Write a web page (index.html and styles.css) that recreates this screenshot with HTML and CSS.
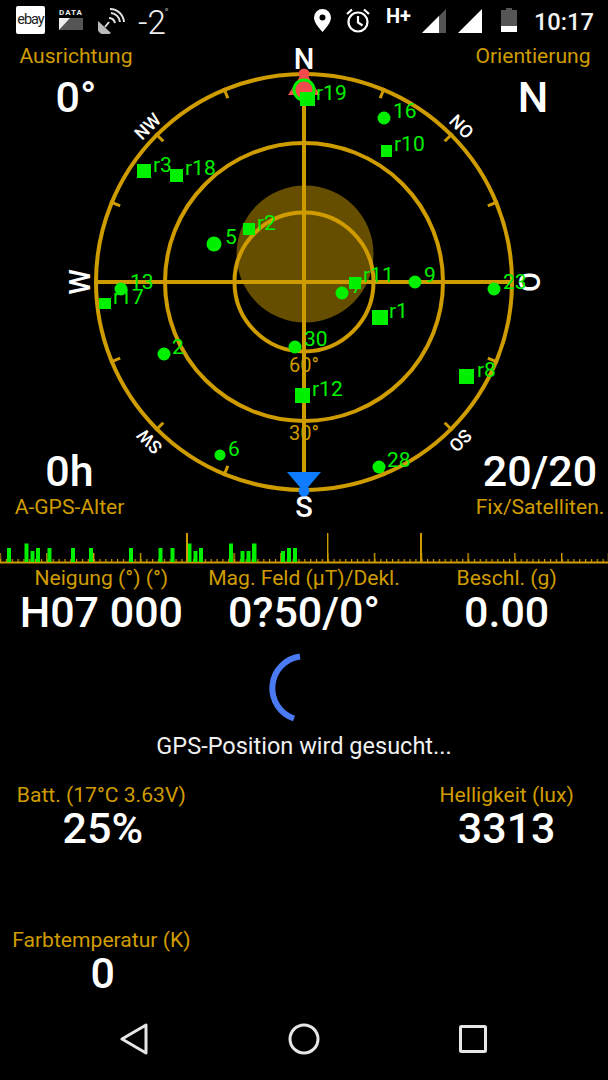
FILE: index.html
```html
<!DOCTYPE html>
<html lang="de">
<head>
    <meta charset="UTF-8">
    <meta name="viewport" content="width=device-width, initial-scale=1.0">
    <title>GPS-Status</title>
    <link rel="stylesheet" href="styles.css">
</head>

<body>
<div class="status">
    <div class="status-left">
        <div class="ebay">ebay</div>
        <svg class="ic-data" viewBox="0 0 24 24">
            <text x="12" y="7" class="data-txt">DATA</text>
            <rect x="0" y="10" width="24" height="12" fill="#555"/>
            <path d="M0 22 L11 10 H0 Z" fill="#eee"/>
        </svg>
        <svg class="ic-sat" viewBox="0 0 27 26">
            <path d="M0 13 L13 25 A9 9 0 0 1 0 13 Z" fill="#bbb"/>
            <g fill="none" stroke="#e0e0e0" stroke-width="2">
                <path d="M11 10 A6.5 6.5 0 0 1 17 15"/>
                <path d="M13 5 A10 10 0 0 1 22 14"/>
                <path d="M12 1 A14 14 0 0 1 26 14"/>
                <path d="M7 19 L11 14"/>
            </g>
        </svg>
        <div class="temp">-2<span class="temp-deg">°</span></div>
    </div>
    <div class="status-right">
        <svg class="ic-pin" viewBox="0 0 17 23">
            <path fill-rule="evenodd" d="M8.5 0 A8.5 8.5 0 0 1 17 8.5 C17 14 11 20 8.5 23 C6 20 0 14 0 8.5 A8.5 8.5 0 0 1 8.5 0 Z M8.5 5.5 A3 3 0 1 0 8.5 11.5 A3 3 0 1 0 8.5 5.5 Z" fill="#fff"/>
        </svg>
        <svg class="ic-alarm" viewBox="0 0 24 25" fill="none" stroke="#fff" stroke-width="2.2">
            <circle cx="12" cy="14" r="9.5"/>
            <path d="M12 8 V14.5 L16.5 17.5"/>
            <path d="M1 6 L6 1.5 M23 6 L18 1.5"/>
        </svg>
        <div class="net">H+</div>
        <svg class="ic-signal" viewBox="0 0 24 24">
            <path d="M0 24 L24 0 V24 Z" fill="#555"/>
            <path d="M0 24 L17 7 V24 Z" fill="#fff"/>
        </svg>
        <svg class="ic-signal2" viewBox="0 0 24 24">
            <path d="M0 24 L24 0 V24 Z" fill="#fff"/>
        </svg>
        <svg class="ic-batt" viewBox="0 0 16 24">
            <path d="M5 0 H11 V2 H16 V24 H0 V2 H5 Z" fill="#555"/>
            <rect y="18" width="16" height="6" fill="#fff"/>
        </svg>
        <div class="clock">10:17</div>
    </div>
</div>

<div class="sky">
    <svg class="sky-map" viewBox="0 42 608 486" width="608" height="486">
        <defs>
            <path id="tick" d="M304 72 V83" stroke-width="3"/>
        </defs>
        <circle class="sun" cx="305" cy="254" r="68.5"/>
        <g class="grid">
            <circle cx="304" cy="282" r="208"/>
            <circle cx="304" cy="282" r="139"/>
            <circle cx="304" cy="282" r="69.5"/>
            <path d="M96 282 H512 M304 74 V490"/>
            <use href="#tick" transform="rotate(22.5 304 282)"/>
            <use href="#tick" transform="rotate(45 304 282)"/>
            <use href="#tick" transform="rotate(67.5 304 282)"/>
            <use href="#tick" transform="rotate(112.5 304 282)"/>
            <use href="#tick" transform="rotate(135 304 282)"/>
            <use href="#tick" transform="rotate(157.5 304 282)"/>
            <use href="#tick" transform="rotate(202.5 304 282)"/>
            <use href="#tick" transform="rotate(225 304 282)"/>
            <use href="#tick" transform="rotate(247.5 304 282)"/>
            <use href="#tick" transform="rotate(292.5 304 282)"/>
            <use href="#tick" transform="rotate(315 304 282)"/>
            <use href="#tick" transform="rotate(337.5 304 282)"/>
        </g>

        <text class="elev" x="304" y="372">60°</text>
        <text class="elev" x="304" y="440">30°</text>

        <text class="dir" x="304" y="69">N</text>
        <text class="dir" x="304" y="517">S</text>
        <text class="dir" transform="translate(90 282) rotate(-90)">W</text>
        <text class="dir" transform="translate(519 282) rotate(90)">O</text>
        <text class="dir-sm" transform="translate(152 131) rotate(-45)">NW</text>
        <text class="dir-sm" transform="translate(457 131) rotate(45)">NO</text>
        <text class="dir-sm" transform="translate(154 437) rotate(225)">SW</text>
        <text class="dir-sm" transform="translate(456 436) rotate(135)">SO</text>

        <path class="red" d="M288 95 L304 70 L320 95 Z"/>
        <circle class="red" cx="304" cy="74" r="5.5"/>
        <circle class="ring" cx="304" cy="90" r="10"/>
        <path class="blue" d="M287 472 H321 L304 492 Z"/>
        <circle class="blue" cx="304" cy="491" r="5.5"/>

        <g class="sats">
            <circle cx="384" cy="118" r="6.5"/>
            <circle cx="214" cy="244" r="7.5"/>
            <circle cx="121" cy="289" r="6.5"/>
            <circle cx="415" cy="282" r="6.5"/>
            <circle cx="494" cy="289" r="6.5"/>
            <circle cx="342" cy="293" r="6.5"/>
            <circle cx="295" cy="347" r="6.5"/>
            <circle cx="164" cy="354" r="6.5"/>
            <circle cx="220" cy="455" r="5.5"/>
            <circle cx="379" cy="467" r="6.5"/>
            <rect x="300" y="92" width="15" height="14"/>
            <rect x="381" y="145" width="11" height="12"/>
            <rect x="137" y="164" width="14" height="14"/>
            <rect x="170" y="169" width="13" height="13"/>
            <rect x="243" y="223" width="12" height="12"/>
            <rect x="99" y="298" width="12" height="11"/>
            <rect x="349" y="277" width="12" height="12"/>
            <rect x="372" y="310" width="16" height="15"/>
            <rect x="295" y="388" width="15" height="15"/>
            <rect x="459" y="369" width="15" height="15"/>
        </g>
        <g class="sat-names">
            <text x="316" y="100">r19</text>
            <text x="393" y="118">16</text>
            <text x="394" y="151">r10</text>
            <text x="153" y="172">r3</text>
            <text x="185" y="175">r18</text>
            <text x="225" y="244">5</text>
            <text x="257" y="230">r2</text>
            <text x="130" y="289">13</text>
            <text x="113" y="304">r17</text>
            <text x="363" y="282">r11</text>
            <text x="424" y="282">9</text>
            <text x="503" y="289">23</text>
            <text x="351" y="293">7</text>
            <text x="389" y="318">r1</text>
            <text x="304" y="346">30</text>
            <text x="172" y="354">2</text>
            <text x="312" y="396">r12</text>
            <text x="477" y="377">r8</text>
            <text x="228" y="456">6</text>
            <text x="387" y="467">28</text>
        </g>
    </svg>

    <div class="corner corner-tl">
        <div class="label">Ausrichtung</div>
        <div class="value">0°</div>
    </div>
    <div class="corner corner-tr">
        <div class="label">Orientierung</div>
        <div class="value">N</div>
    </div>
    <div class="corner corner-bl">
        <div class="value">0h</div>
        <div class="label">A-GPS-Alter</div>
    </div>
    <div class="corner corner-br">
        <div class="value">20/20</div>
        <div class="label">Fix/Satelliten.</div>
    </div>
</div>

<svg class="signal" viewBox="0 528 608 37" width="608" height="37">
    <defs>
        <pattern id="minor" x="0" y="0" width="5.85" height="40" patternUnits="userSpaceOnUse">
            <rect x="0" y="0" width="1.2" height="40" fill="#cf9c00"/>
        </pattern>
        <pattern id="middle" x="46.2" y="0" width="46.8" height="40" patternUnits="userSpaceOnUse">
            <rect x="0" y="0" width="1.4" height="40" fill="#cf9c00"/>
        </pattern>
    </defs>
    <rect x="0" y="559" width="608" height="3" fill="url(#minor)"/>
    <rect x="0" y="553" width="608" height="9" fill="url(#middle)"/>
    <rect x="0" y="561.5" width="608" height="2" fill="#cf9c00"/>
    <rect x="186" y="533" width="2" height="29" fill="#cf9c00"/>
    <rect x="327" y="533" width="1.4" height="29" fill="#cf9c00"/>
    <rect x="420" y="533" width="2" height="29" fill="#cf9c00"/>
    <g fill="#00f000">
        <rect x="7" y="548" width="4" height="14"/>
        <rect x="24.5" y="543.5" width="4" height="18.5"/>
        <rect x="30.5" y="551" width="4" height="11"/>
        <rect x="36" y="548" width="4" height="14"/>
        <rect x="47.5" y="548" width="4" height="14"/>
        <rect x="71" y="548" width="4" height="14"/>
        <rect x="89" y="548" width="4" height="14"/>
        <rect x="129" y="548" width="4" height="14"/>
        <rect x="158.5" y="548" width="4" height="14"/>
        <rect x="170.5" y="548" width="4" height="14"/>
        <rect x="188" y="543.5" width="3.5" height="18.5"/>
        <rect x="193.5" y="551" width="4" height="11"/>
        <rect x="199" y="548" width="4" height="14"/>
        <rect x="229" y="543.5" width="4" height="18.5"/>
        <rect x="240.5" y="551" width="4" height="11"/>
        <rect x="246.5" y="551" width="4" height="11"/>
        <rect x="252" y="543.5" width="4.5" height="18.5"/>
        <rect x="281" y="551" width="4" height="11"/>
        <rect x="287" y="548" width="4" height="14"/>
        <rect x="293" y="548" width="4" height="14"/>
    </g>
</svg>

<div class="readings">
    <div class="reading">
        <div class="label">Neigung (°) (°)</div>
        <div class="value">H07 000</div>
    </div>
    <div class="reading">
        <div class="label">Mag. Feld (µT)/Dekl.</div>
        <div class="value">0?50/0°</div>
    </div>
    <div class="reading">
        <div class="label">Beschl. (g)</div>
        <div class="value">0.00</div>
    </div>
</div>

<div class="search">
    <svg class="spinner" viewBox="0 0 70 70" width="70" height="70">
        <path d="M33 3.5 A32 32 0 0 0 27 65.5" fill="none" stroke="#4a7bf5" stroke-width="6"/>
    </svg>
    <div class="search-text">GPS-Position wird gesucht...</div>
</div>

<div class="readings readings-low">
    <div class="reading">
        <div class="label">Batt. (17°C 3.63V)</div>
        <div class="value value-left">25%</div>
    </div>
    <div class="reading"></div>
    <div class="reading">
        <div class="label">Helligkeit (lux)</div>
        <div class="value">3313</div>
    </div>
    <div class="reading">
        <div class="label">Farbtemperatur (K)</div>
        <div class="value value-left">0</div>
    </div>
</div>

<div class="nav">
    <svg viewBox="0 0 32 32" width="32" height="32">
        <path d="M3 16 L27 2 V30 Z" fill="none" stroke="#e6e6e6" stroke-width="3" stroke-linejoin="round"/>
    </svg>
    <svg viewBox="0 0 32 32" width="32" height="32">
        <circle cx="16" cy="16" r="14" fill="none" stroke="#e6e6e6" stroke-width="3"/>
    </svg>
    <svg viewBox="0 0 32 32" width="32" height="32">
        <rect x="3.5" y="3.5" width="25" height="25" rx="1" fill="none" stroke="#e6e6e6" stroke-width="3"/>
    </svg>
</div>
</body>
</html>
```

FILE: styles.css
```css
* {
    box-sizing: border-box;
}

body {
    margin: 0;
    width: 608px;
    height: 1080px;
    overflow: hidden;
    display: flex;
    flex-direction: column;
    background: #000;
    color: #fff;
    font-family: Roboto, "Liberation Sans", sans-serif;
}

/* status bar */
.status {
    height: 42px;
    flex: none;
    display: flex;
    justify-content: space-between;
    padding: 6px 14px 0 16px;
}

.status-left,
.status-right {
    display: flex;
    align-items: flex-start;
}

.ebay {
    width: 29px;
    height: 28px;
    line-height: 27px;
    text-align: center;
    background: #fff;
    border-radius: 2px;
    color: #222;
    font-size: 14.5px;
    letter-spacing: -1px;
}

.ic-data {
    width: 24px;
    height: 24px;
    margin: 2px 0 0 14px;
}

.data-txt {
    fill: #eee;
    font-size: 8px;
    font-weight: 700;
    letter-spacing: 1px;
    text-anchor: middle;
}

.ic-sat {
    width: 27px;
    height: 26px;
    margin: 2px 0 0 15px;
}

.temp {
    margin-left: 13px;
    font-size: 33px;
    font-weight: 300;
    line-height: 33px;
    color: #eee;
    position: relative;
}

.temp-deg {
    font-size: 11px;
    line-height: 11px;
    position: absolute;
    right: -3px;
    top: 1px;
}

.ic-pin {
    width: 17px;
    height: 23px;
    margin-top: 3px;
}

.ic-alarm {
    width: 24px;
    height: 25px;
    margin: 2px 0 0 15px;
}

.net {
    width: 30px;
    margin: 0 0 0 16px;
    font-size: 20px;
    font-weight: 700;
    line-height: 20px;
}

.ic-signal {
    width: 24px;
    height: 24px;
    margin: 3px 0 0 6px;
}

.ic-signal2 {
    width: 24px;
    height: 24px;
    margin: 3px 0 0 12px;
}

.ic-batt {
    width: 16px;
    height: 24px;
    margin: 2px 0 0 19px;
}

.clock {
    margin-left: 17px;
    font-size: 23.7px;
    font-weight: 500;
    line-height: 32px;
    color: #f2f2f2;
}

/* compass */
.sky {
    position: relative;
    height: 486px;
    flex: none;
}

.sky-map {
    display: block;
}

.sun {
    fill: #664e00;
}

.grid {
    fill: none;
    stroke: #cf9c00;
    stroke-width: 4;
}

.elev {
    fill: #cf9c00;
    font-size: 20px;
    text-anchor: middle;
}

.dir {
    fill: #fff;
    font-size: 29px;
    font-weight: 500;
    text-anchor: middle;
}

.dir-sm {
    fill: #fff;
    font-size: 18px;
    font-weight: 500;
    text-anchor: middle;
}

.red {
    fill: #f44c4c;
}

.blue {
    fill: #0f7cff;
}

.ring {
    fill: #f44c4c;
    stroke: #00f000;
    stroke-width: 3;
}

.sats {
    fill: #00f000;
}

.sat-names {
    fill: #00f000;
    font-size: 21px;
}

.corner {
    position: absolute;
    text-align: center;
    white-space: nowrap;
}

.corner-tl {
    left: 0;
    top: 2px;
    width: 152px;
}

.corner-tr {
    right: 0;
    top: 2px;
    width: 150px;
}

.corner-tl .value,
.corner-tr .value {
    margin-top: 7px;
}

.corner-bl {
    left: 0;
    top: 407px;
    width: 139px;
}

.corner-br {
    right: 0;
    top: 407px;
    width: 136px;
}

.corner-bl .label,
.corner-br .label {
    margin-top: 2px;
}

.label {
    font-size: 21.1px;
    line-height: 24px;
    color: #cf9c00;
    white-space: nowrap;
}

.value {
    font-size: 43px;
    font-weight: 500;
    line-height: 44px;
    white-space: nowrap;
}

.signal {
    display: block;
    flex: none;
}

/* readings */
.readings {
    display: grid;
    grid-template-columns: repeat(3, 1fr);
    padding-top: 1px;
    text-align: center;
}

.readings-low {
    margin-top: 22px;
    row-gap: 78px;
}

.readings-low .value {
    margin-top: -1px;
}

.readings-low .value-left {
    padding-left: 3px;
}

.search {
    display: flex;
    flex-direction: column;
    align-items: center;
    margin-top: 19px;
}

.spinner {
    display: block;
    margin-right: 4px;
}

.search-text {
    margin-top: 9px;
    font-size: 23.5px;
    line-height: 28px;
    color: #f0f0f0;
}

/* nav */
.nav {
    margin-top: auto;
    height: 82px;
    flex: none;
    display: flex;
    justify-content: center;
    align-items: center;
    gap: 137px;
}
```
